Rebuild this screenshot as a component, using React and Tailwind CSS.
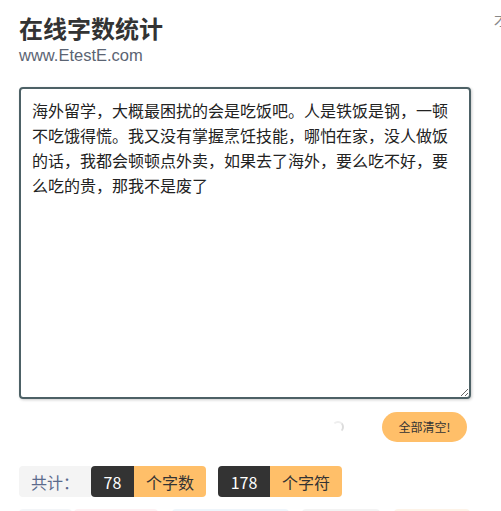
import React from "react";

const text =
  "海外留学，大概最困扰的会是吃饭吧。人是铁饭是钢，一顿不吃饿得慌。我又没有掌握烹饪技能，哪怕在家，没人做饭的话，我都会顿顿点外卖，如果去了海外，要么吃不好，要么吃的贵，那我不是废了";

export default function App() {
  return (
    <div
      className="relative w-[501px] h-[511px] overflow-hidden bg-white text-[#333]"
      style={{ fontFamily: '"Microsoft YaHei", "Noto Sans CJK SC", "Liberation Sans", sans-serif' }}
    >
      <div className="absolute left-[494px] top-[12px] text-[14px] text-[#888] leading-none">才</div>
      <div className="pl-[19px] pr-[30px]">
        <h1 className="pt-[13px] text-[24px] font-bold leading-[30px] text-[#333]">在线字数统计</h1>
        <div className="mt-[2px] text-[16.5px] leading-[20px] text-[#5b6473]" style={{ fontFamily: '"Liberation Sans", "Noto Sans CJK SC", sans-serif' }}>
          www.EtestE.com
        </div>
        <textarea
          defaultValue={text}
          className="mt-[22px] block w-[452px] h-[312px] rounded-[4px] border-2 border-[#4d6166] px-[11px] py-[9px] text-[16px] leading-[25px] text-[#222] outline-none shadow-[1px_1px_3px_rgba(0,0,0,0.2)] resize"
          style={{ fontFamily: '"Microsoft YaHei", "Noto Sans CJK SC", sans-serif' }}
        />
        <div className="mt-[13px] flex items-center justify-end w-[452px]">
          <div className="mr-[38px] w-[12px] h-[12px] rounded-full border-2 border-transparent border-r-[#dcdcdc] border-t-[#eeeeee]" />
          <button className="w-[85px] h-[30px] rounded-full bg-[#ffbf69] text-[12px] text-[#333] mr-[4px]">全部清空!</button>
        </div>
        <div className="mt-[24px] flex items-center h-[31px] text-[16px]">
          <div className="h-full w-[72px] flex items-center justify-center bg-[#f4f4f4] text-[#5a6a8c] rounded-l-[4px]">共计：</div>
          <div className="h-full w-[43px] flex items-center justify-center bg-[#333333] text-white rounded-l-[4px]">78</div>
          <div className="h-full w-[72px] flex items-center justify-center bg-[#ffbf69] text-[#333] rounded-r-[4px]">个字数</div>
          <div className="ml-[12px] h-full w-[52px] flex items-center justify-center bg-[#333333] text-white rounded-l-[4px]">178</div>
          <div className="h-full w-[72px] flex items-center justify-center bg-[#ffbf69] text-[#333] rounded-r-[4px]">个字符</div>
        </div>
        <div className="mt-[12px] flex h-[20px] gap-[2px]">
          <div className="w-[53px] rounded-[4px] bg-[#f3f5f8]" />
          <div className="w-[84px] rounded-[4px] bg-[#fdf0f2]" />
          <div className="ml-[12px] w-[117px] rounded-[4px] bg-[#eef5fb]" />
          <div className="ml-[11px] w-[78px] rounded-[4px] bg-[#f3f3f3]" />
          <div className="ml-[12px] w-[76px] rounded-[4px] bg-[#fdf3e8]" />
        </div>
      </div>
    </div>
  );
}
